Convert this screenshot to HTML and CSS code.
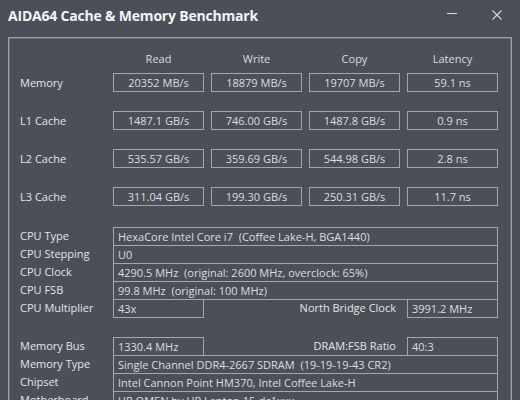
FILE: index.html
```html
<!DOCTYPE html>
<html>
<head>
<meta charset="utf-8">
<link rel="stylesheet" href="styles.css">
</head>
<body>
<div class="window">
  <div class="titlebar">
    <div class="title">AIDA64 Cache &amp; Memory Benchmark</div>
    <div class="controls">
      <svg class="ctl" width="10" height="10" viewBox="0 0 10 10"><path d="M0 3.5H10" stroke="#d8dade" stroke-width="1"/></svg>
      <svg class="ctl close" width="10" height="10" viewBox="0 0 10 10"><path d="M0.5 0.5L9.5 9.5M9.5 0.5L0.5 9.5" stroke="#d8dade" stroke-width="1.1"/></svg>
    </div>
  </div>
  <div class="panel">
    <div class="heads">
      <div></div>
      <div class="head">Read</div>
      <div class="head">Write</div>
      <div class="head">Copy</div>
      <div class="head">Latency</div>
    </div>
    <div class="bench">
      <div class="label">Memory</div>
      <div class="val">20352 MB/s</div>
      <div class="val">18879 MB/s</div>
      <div class="val">19707 MB/s</div>
      <div class="val">59.1 ns</div>

      <div class="label">L1 Cache</div>
      <div class="val">1487.1 GB/s</div>
      <div class="val">746.00 GB/s</div>
      <div class="val">1487.8 GB/s</div>
      <div class="val">0.9 ns</div>

      <div class="label">L2 Cache</div>
      <div class="val">535.57 GB/s</div>
      <div class="val">359.69 GB/s</div>
      <div class="val">544.98 GB/s</div>
      <div class="val">2.8 ns</div>

      <div class="label">L3 Cache</div>
      <div class="val">311.04 GB/s</div>
      <div class="val">199.30 GB/s</div>
      <div class="val">250.31 GB/s</div>
      <div class="val">11.7 ns</div>
    </div>

    <div class="info first">
      <div class="label">CPU Type</div>
      <div class="box wide">HexaCore Intel Core i7&nbsp; (Coffee Lake-H, BGA1440)</div>
      <div class="label">CPU Stepping</div>
      <div class="box wide">U0</div>
      <div class="label">CPU Clock</div>
      <div class="box wide">4290.5 MHz&nbsp; (original: 2600 MHz, overclock: 65%)</div>
      <div class="label">CPU FSB</div>
      <div class="box wide">99.8 MHz&nbsp; (original: 100 MHz)</div>
      <div class="label">CPU Multiplier</div>
      <div class="box">43x</div>
      <div class="rlabel">North Bridge Clock</div>
      <div class="box">3991.2 MHz</div>
    </div>

    <div class="info second">
      <div class="label">Memory Bus</div>
      <div class="box">1330.4 MHz</div>
      <div class="rlabel">DRAM:FSB Ratio</div>
      <div class="box">40:3</div>
      <div class="label">Memory Type</div>
      <div class="box wide">Single Channel DDR4-2667 SDRAM&nbsp; (19-19-19-43 CR2)</div>
      <div class="label">Chipset</div>
      <div class="box wide">Intel Cannon Point HM370, Intel Coffee Lake-H</div>
      <div class="label">Motherboard</div>
      <div class="box wide">HP OMEN by HP Laptop 15-dc1xxx</div>
    </div>
  </div>
</div>
</body>
</html>
```

FILE: styles.css
```css
html, body {
  margin: 0;
  padding: 0;
  background: #4b4f58;
  overflow: hidden;
}
body {
  font-family: "Open Sans", "Noto Sans", sans-serif;
  color: #e2e3e6;
  width: 520px;
  height: 400px;
}
.window {
  width: 520px;
  height: 400px;
  overflow: hidden;
}
.titlebar {
  height: 37px;
  display: flex;
  align-items: flex-start;
  justify-content: space-between;
  box-sizing: border-box;
  padding: 6px 0 0 8px;
}
.title {
  font-size: 14px;
  font-weight: 700;
  color: #f4f4f6;
  line-height: 20px;
  letter-spacing: -0.2px;
}
.controls {
  display: flex;
  gap: 35px;
  padding: 4px 18px 0 0;
}
.panel {
  margin: 0 8px;
  border-top: 1px solid #9da0a6;
  border-left: 1px solid #9da0a6;
  border-right: 1px solid #9da0a6;
  box-shadow: inset 1px 1px 0 #6b6f77, inset -1px 0 0 #6b6f77;
  padding: 11px 0 0 11px;
  height: 400px;
}
.heads,
.bench,
.info {
  display: grid;
  grid-template-columns: 86px repeat(4, 91px);
  column-gap: 7px;
}
.heads {
  grid-auto-rows: 19px;
  margin-bottom: 5px;
}
.head {
  font-size: 11px;
  color: #d9dadd;
  text-align: center;
  line-height: 19px;
}
.bench {
  grid-auto-rows: 19px;
  row-gap: 19px;
}
.label {
  font-size: 11px;
  color: #e3e4e7;
  line-height: 18px;
  white-space: nowrap;
}
.bench .label {
  line-height: 19px;
}
.val {
  border: 1px solid #a3a6ab;
  box-sizing: border-box;
  font-size: 11px;
  color: #dcdde0;
  text-align: center;
  line-height: 17px;
  white-space: nowrap;
}
.info {
  grid-auto-rows: 18px;
}
.info.first {
  margin-top: 21px;
}
.info.second {
  margin-top: 20px;
}
.info .box {
  border: 1px solid #a3a6ab;
  box-sizing: border-box;
  height: 19px;
  font-size: 11px;
  color: #dcdde0;
  line-height: 17px;
  padding-left: 4px;
  white-space: nowrap;
  overflow: hidden;
}
.info .wide {
  grid-column: 2 / 6;
}
.info .rlabel {
  grid-column: 3 / 5;
  text-align: right;
  font-size: 11px;
  color: #e3e4e7;
  line-height: 18px;
  padding-right: 4px;
}
```
